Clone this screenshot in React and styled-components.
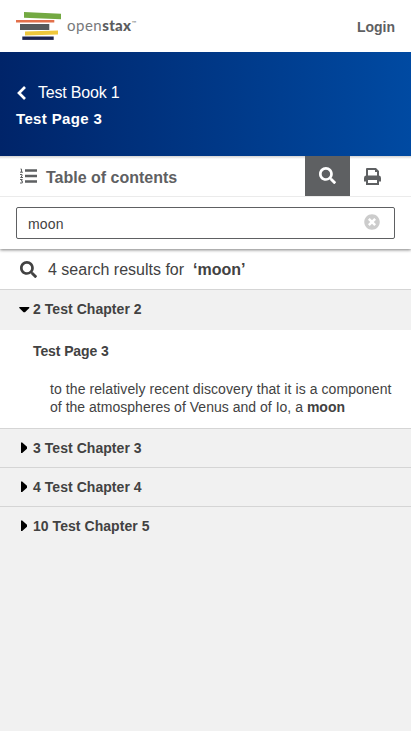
import React from "react";
import styled, { createGlobalStyle } from "styled-components";
import { FaSearch, FaTimesCircle } from "react-icons/fa";

const GlobalStyle = createGlobalStyle`
  * { box-sizing: border-box; }
  html, body { margin: 0; background: #f1f1f1; }
  body {
    font-family: "Liberation Sans", Arial, sans-serif;
    font-size: 14px;
    color: #424242;
    overflow: hidden;
  }
  svg { display: block; flex: none; }
`;

const Page = styled.div`
  display: flex;
  flex-direction: column;
  min-height: 731px;
`;

const TopBar = styled.header`
  height: 52px;
  padding: 0 16px;
  display: flex;
  align-items: center;
  justify-content: space-between;
  background: #fff;
`;

const Brand = styled.div`
  display: flex;
  align-items: center;
  gap: 6px;
`;

const Wordmark = styled.span`
  display: flex;
  padding-bottom: 2px;
  font: 400 15px/20px Lato, sans-serif;
  letter-spacing: 0.5px;
  color: #77797b;
  b { font-weight: 900; letter-spacing: 0.3px; color: #5a5c5e; }
  small { font-size: 6px; line-height: 15px; letter-spacing: 0; }
`;

const Login = styled.a`
  font-weight: 700;
  line-height: 20px;
  padding-top: 2px;
  color: #5e6062;
`;

const BookBanner = styled.section`
  height: 104px;
  padding: 28px 16px 0;
  color: #fff;
  font-size: 16px;
  background: linear-gradient(to right, #002469, #004aa2);
`;

const BookLink = styled.a`
  display: flex;
  align-items: center;
  height: 26px;
  gap: 10px;
  letter-spacing: -0.2px;
`;

const PageTitle = styled.h1`
  margin: 0;
  font-size: 15px;
  line-height: 26px;
  letter-spacing: 0.35px;
`;

const Toolbar = styled.nav`
  display: flex;
  height: 41px;
  background: linear-gradient(#d2d2d2, #fff 3px);
  border-bottom: 1px solid #ebebeb;
  color: #5e6062;
`;

const ContentsButton = styled.div`
  flex: 1;
  display: flex;
  align-items: center;
  gap: 9px;
  padding: 3px 0 0 20px;
  font-size: 16px;
  font-weight: 700;
  svg { margin-top: -3px; }
`;

const ToolButton = styled.div`
  width: ${(p) => (p.$active ? 45 : 61)}px;
  height: 40px;
  padding-left: ${(p) => (p.$active ? 0 : 14)}px;
  display: flex;
  align-items: center;
  justify-content: ${(p) => (p.$active ? "center" : "flex-start")};
  color: ${(p) => (p.$active ? "#fff" : "#5e6062")};
  background: ${(p) => (p.$active ? "#5e6062" : "transparent")};
  svg { margin-top: ${(p) => (p.$active ? -1 : 1)}px; }
`;

const SearchPanel = styled.div`
  position: relative;
  height: 52px;
  padding: 10px 16px;
  background: #fff;
  box-shadow: 0 1px 3px rgba(0, 0, 0, 0.5);
  clip-path: inset(0 0 -6px 0);
`;

const SearchBox = styled.div`
  display: flex;
  align-items: center;
  justify-content: space-between;
  height: 32px;
  padding: 0 14px 0 11px;
  border: 1px solid #5e6062;
  border-radius: 2px;
  line-height: 18px;
  svg { color: #ccc; margin-top: -2px; }
  span { padding-top: 2px; letter-spacing: 0.2px; }
`;

const Summary = styled.div`
  height: 41px;
  display: flex;
  align-items: center;
  padding: 1px 0 0 20px;
  background: #fff;
  border-bottom: 1px solid #d5d5d5;
  font-size: 16px;
  white-space: pre;
  svg { margin: -1px 11px 0 0; }
`;

const ChapterRow = styled.div`
  display: flex;
  align-items: center;
  height: ${(p) => (p.$open ? 40 : 39)}px;
  padding: 0 0 ${(p) => (p.$open ? 2 : 0)}px 19px;
  border-top: ${(p) => (p.$open ? "none" : "1px solid #d5d5d5")};
  font-weight: 700;
  letter-spacing: 0.05px;
`;

const Marker = styled.svg`
  width: 11px;
  height: 12px;
  margin-right: 3px;
  fill: #000;
`;

const Results = styled.div`
  height: 98px;
  padding: 11px 0 0 33px;
  background: #fff;
`;

const ResultTitle = styled.div`
  line-height: 20px;
  font-weight: 700;
  letter-spacing: -0.1px;
`;

const Excerpt = styled.div`
  margin: 19px 0 0 17px;
  line-height: 18px;
  white-space: nowrap;
`;

const ExcerptLine = styled.div`
  letter-spacing: ${(p) => p.$spacing}px;
`;

const Logo = () => (
  <svg width="45" height="30" viewBox="16 11 45 30">
    <path d="M24 12l37 1.800v5.400l-37-1.400z" fill="#73a942" />
    <path d="M16 20h38.300v2.500H16z" fill="#e2704b" />
    <path d="M20 24h29.300v6H20z" fill="#575a5c" />
    <path d="M25 31.500l33-.9v4l-33 .8z" fill="#efc73c" />
    <path d="M22.300 36.500h31.400v3.400H22.300z" fill="#1d2450" />
  </svg>
);

const BackIcon = () => (
  <svg width="12" height="16" viewBox="0 0 12 16">
    <path d="M9 2L3 8l6 6" fill="none" stroke="#fff" strokeWidth="2.700" />
  </svg>
);

const ContentsIcon = () => (
  <svg width="17" height="16" viewBox="0 0 17 16" fill="none" stroke="currentColor">
    <path d="M5 2.500h12M5 8h12M5 13.500h12" strokeWidth="2.300" />
    <path d="M.5 1h1v3M0 4.200h3M0 6.500h2v1.500L.5 9.500H3M0 11.500h2.300L1.300 13h1v2H0" strokeWidth="1" />
  </svg>
);

const PrintIcon = () => (
  <svg width="17" height="17" viewBox="0 0 17 17">
    <path
      fill="currentColor"
      fillRule="evenodd"
      d="M3 0h9l3 3v4.500q2 .3 2 2.500v3.500h-2V17H2v-3.500H0V10q0-2.200 2-2.500V1q0-1 1-1zM4 2v5.500h9V4h-2V2zM4 12v3h9v-3z"
    />
  </svg>
);

const closedChapters = ["3 Test Chapter 3", "4 Test Chapter 4", "10 Test Chapter 5"];

export default function App() {
  return (
    <Page>
      <GlobalStyle />
      <TopBar>
        <Brand>
          <Logo />
          <Wordmark>open<b>stax</b><small>™</small></Wordmark>
        </Brand>
        <Login>Login</Login>
      </TopBar>
      <BookBanner>
        <BookLink><BackIcon />Test Book 1</BookLink>
        <PageTitle>Test Page 3</PageTitle>
      </BookBanner>
      <Toolbar>
        <ContentsButton><ContentsIcon />Table of contents</ContentsButton>
        <ToolButton $active><FaSearch size={17} /></ToolButton>
        <ToolButton><PrintIcon /></ToolButton>
      </Toolbar>
      <SearchPanel>
        <SearchBox><span>moon</span><FaTimesCircle size={16} /></SearchBox>
      </SearchPanel>
      <Summary><FaSearch size={17} />4 search results for  <b>‘moon’</b></Summary>
      <ChapterRow $open>
        <Marker viewBox="0 0 11 12"><path d="M0.300 4h10v1L6 9.200H4.600L0.300 5z" /></Marker>
        2 Test Chapter 2
      </ChapterRow>
      <Results>
        <ResultTitle>Test Page 3</ResultTitle>
        <Excerpt>
          <ExcerptLine $spacing={0.08}>to the relatively recent discovery that it is a component</ExcerptLine>
          <ExcerptLine $spacing={0.02}>of the atmospheres of Venus and of Io, a <b>moon</b></ExcerptLine>
        </Excerpt>
      </Results>
      {closedChapters.map((title) => (
        <ChapterRow key={title}>
          <Marker viewBox="0 0 11 12"><path d="M2 0.500h1.200L8 4.800v2L3.200 11H2z" /></Marker>
          {title}
        </ChapterRow>
      ))}
    </Page>
  );
}
